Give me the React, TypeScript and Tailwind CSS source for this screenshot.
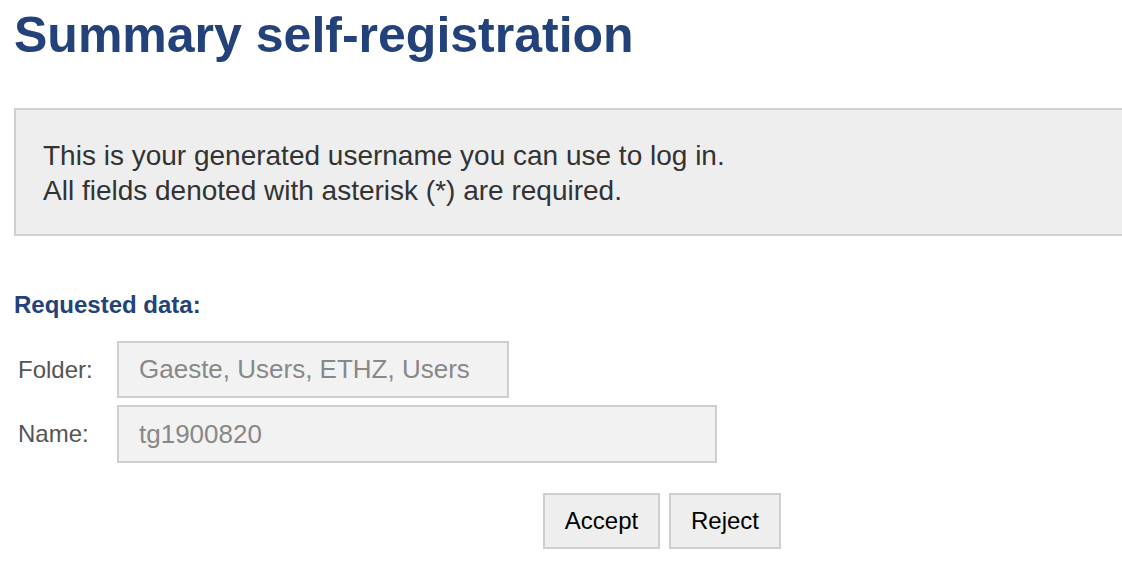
export default function App() {
  return (
    <div className="min-h-[584px] w-[1122px] overflow-hidden bg-white font-['Liberation_Sans',Arial,sans-serif]">
      <h1 className="ml-[14px] pt-[4px] text-[50px] font-bold leading-[62px] text-[#23427a]">
        Summary self-registration
      </h1>

      {/* Info box */}
      <div className="ml-[14px] mt-[42px] w-[1120px] border-2 border-r-0 border-[#cfcfcf] bg-[#eeeeee] pl-[27px] pt-[28px] pb-[26px] text-[28px] leading-[35px] text-[#333]">
        <p>This is your generated username you can use to log in.</p>
        <p>All fields denoted with asterisk (*) are required.</p>
      </div>

      <h2 className="ml-[14px] mt-[55px] text-[24px] font-bold leading-[28px] text-[#23427a]">
        Requested data:
      </h2>

      <div className="ml-[18px] mt-[22px] flex flex-col gap-[7px]">
        <div className="flex items-center">
          <label className="w-[99px] text-[24px] text-[#555]">Folder:</label>
          <div className="flex h-[57px] w-[392px] items-center border-2 border-[#cfcfcf] bg-[#f2f2f2] pl-[20px] text-[26px] text-[#888]">
            Gaeste, Users, ETHZ, Users
          </div>
        </div>
        <div className="flex items-center">
          <label className="w-[99px] text-[24px] text-[#555]">Name:</label>
          <div className="flex h-[58px] w-[600px] items-center border-2 border-[#cfcfcf] bg-[#f2f2f2] pl-[20px] text-[26px] text-[#888]">
            tg1900820
          </div>
        </div>
      </div>

      <div className="ml-[543px] mt-[30px] flex gap-[9px]">
        <button className="h-[56px] w-[117px] border-2 border-[#cfcfcf] bg-[#eeeeee] text-[24px] text-black">
          Accept
        </button>
        <button className="h-[56px] w-[112px] border-2 border-[#cfcfcf] bg-[#eeeeee] text-[24px] text-black">
          Reject
        </button>
      </div>
    </div>
  );
}
